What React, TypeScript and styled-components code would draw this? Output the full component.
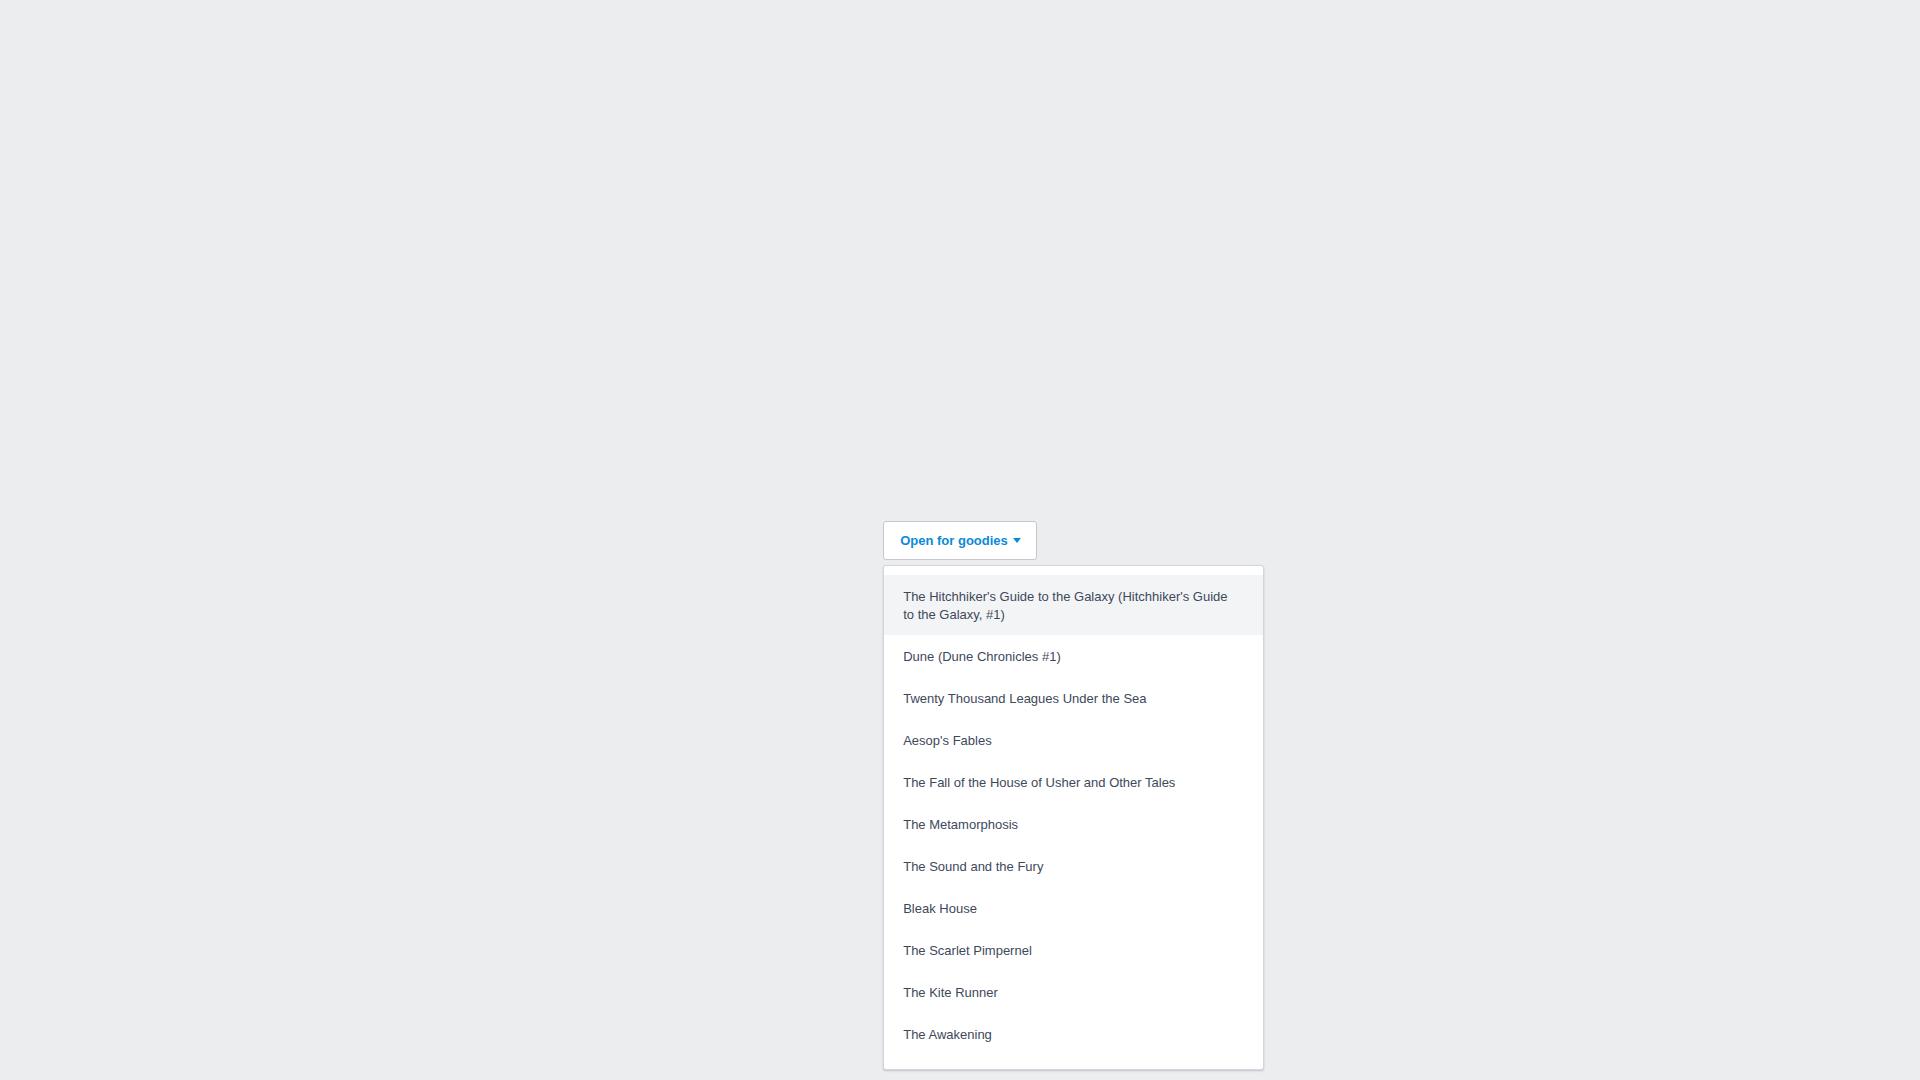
import React, { useState } from "react";
import styled, { createGlobalStyle } from "styled-components";

const GlobalStyle = createGlobalStyle`
  html, body {
    margin: 0;
    padding: 0;
    background: #ecedef;
  }
  body {
    font-family: "Liberation Sans", Arial, sans-serif;
  }
`;

const Page = styled.div`
  min-height: 100vh;
  display: flex;
  align-items: center;
  justify-content: center;
`;

const Dropdown = styled.div`
  position: relative;
`;

const Toggle = styled.button`
  display: flex;
  align-items: center;
  height: 39px;
  padding: 0 15px 0 16px;
  border: 1px solid #c3c8cf;
  border-radius: 3px;
  background: #fff;
  color: #0b8ad8;
  font-family: "Liberation Sans", Arial, sans-serif;
  font-size: 13px;
  font-weight: bold;
  cursor: pointer;
`;

const Caret = styled.span`
  width: 0;
  height: 0;
  margin-left: 5px;
  margin-top: 1px;
  border-left: 4.5px solid transparent;
  border-right: 4.5px solid transparent;
  border-top: 5px solid #0b8ad8;
`;

const Menu = styled.ul`
  position: absolute;
  top: calc(100% + 5px);
  left: 0;
  width: 381px;
  box-sizing: border-box;
  margin: 0;
  padding: 9px 0 14px;
  list-style: none;
  background: #fff;
  border: 1px solid #d3d7dc;
  border-radius: 3px;
  box-shadow: 0 1px 2px rgba(60, 70, 85, 0.25);
`;

const Item = styled.li<{ $active?: boolean }>`
  padding: 13px 26px 11px 19px;
  font-size: 13px;
  line-height: 18px;
  color: #3d495b;
  background: ${({ $active }) => ($active ? "#f3f4f6" : "#fff")};
  cursor: pointer;
`;

const books = [
  "The Hitchhiker's Guide to the Galaxy (Hitchhiker's Guide to the Galaxy, #1)",
  "Dune (Dune Chronicles #1)",
  "Twenty Thousand Leagues Under the Sea",
  "Aesop's Fables",
  "The Fall of the House of Usher and Other Tales",
  "The Metamorphosis",
  "The Sound and the Fury",
  "Bleak House",
  "The Scarlet Pimpernel",
  "The Kite Runner",
  "The Awakening",
];

export default function App() {
  const [open, setOpen] = useState(true);
  const [active, setActive] = useState(0);

  return (
    <Page>
      <GlobalStyle />
      <Dropdown>
        <Toggle onClick={() => setOpen(!open)}>
          Open for goodies
          <Caret />
        </Toggle>
        {open && (
          <Menu>
            {books.map((title, idx) => (
              <Item key={title} $active={idx === active} onMouseEnter={() => setActive(idx)}>
                {title}
              </Item>
            ))}
          </Menu>
        )}
      </Dropdown>
    </Page>
  );
}
